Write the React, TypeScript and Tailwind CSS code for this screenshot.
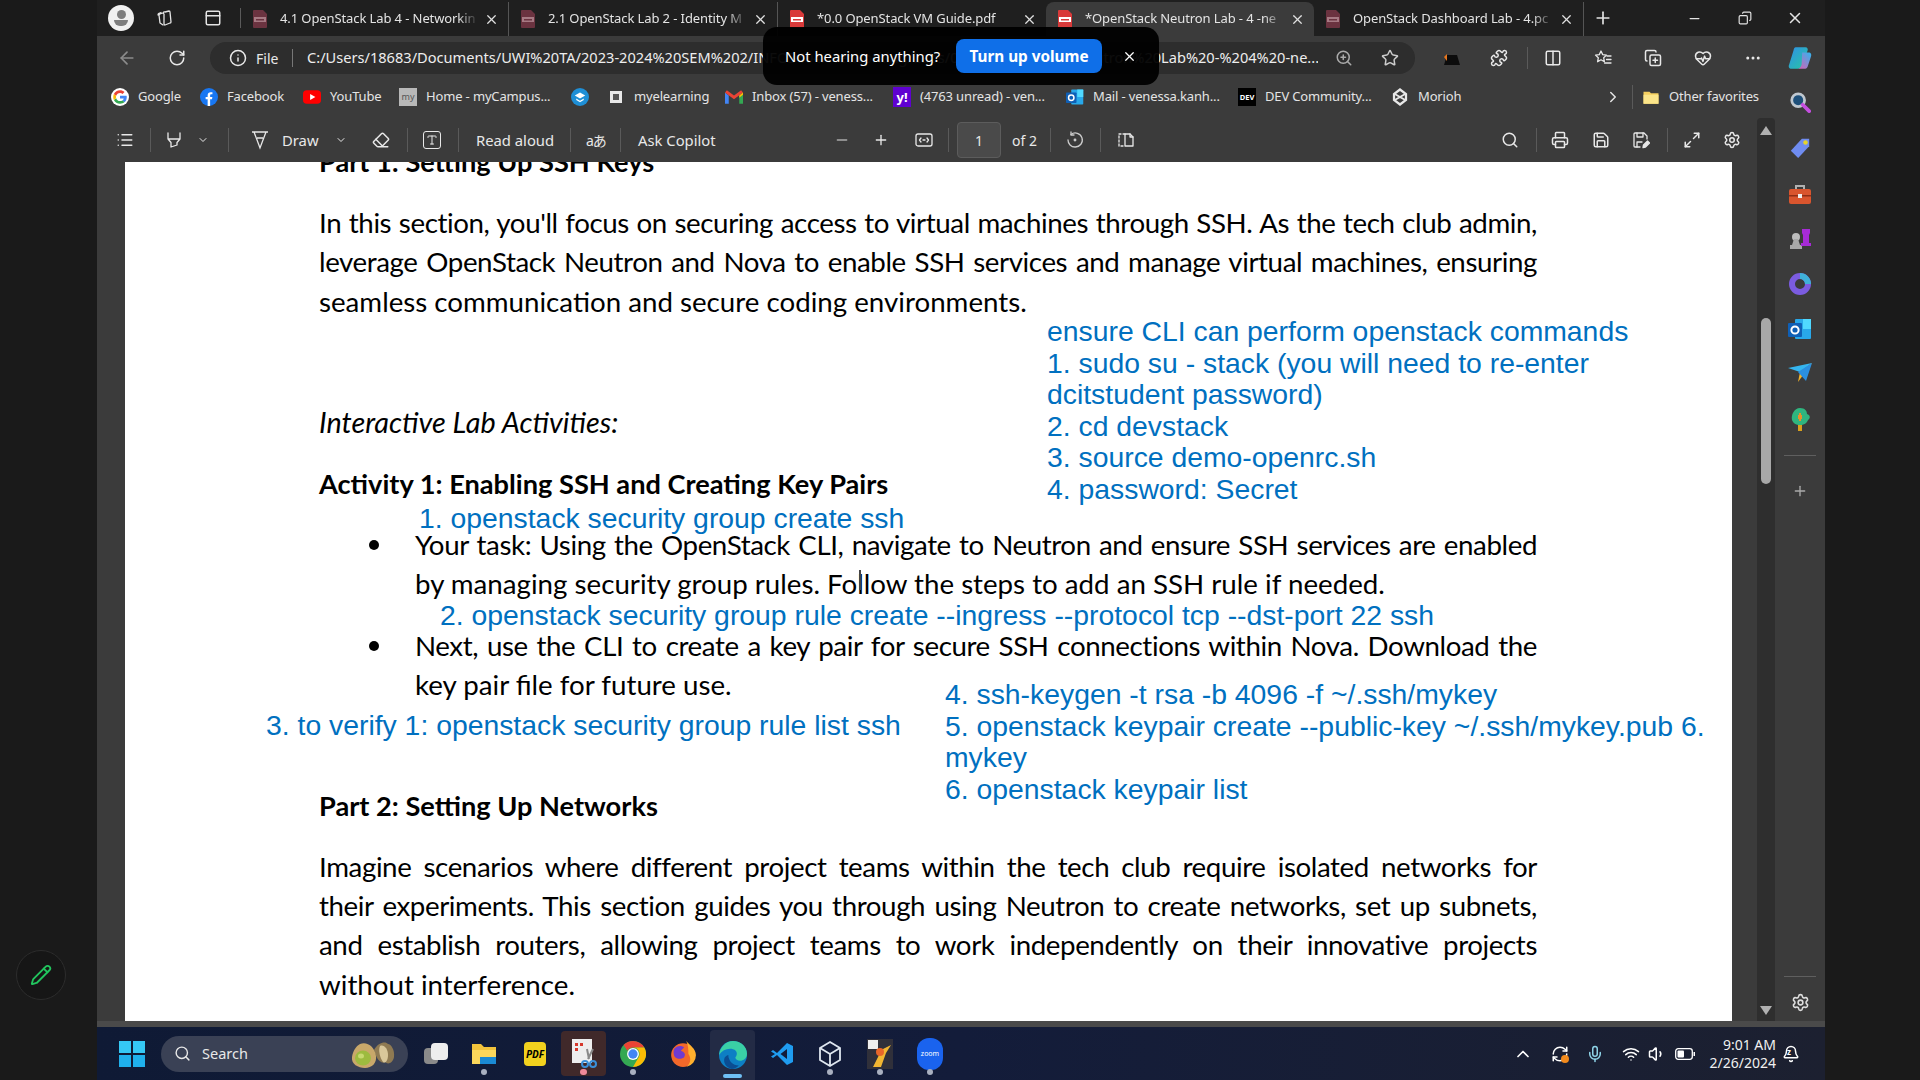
import React from "react";
import {
  ArrowLeft, RotateCw, Info, ZoomIn, Star, Puzzle, Columns2, Plus, Minus, X, Copy, List,
  ChevronDown, ChevronRight, ChevronUp, Eraser, Type, Search, Printer, Save, Maximize2,
  Settings, HeartPulse, Ellipsis, Mic, Wifi, Volume1, Bell, RefreshCw, Pencil,
  PanelTop, CopyPlus,
} from "lucide-react";

const ui = "font-['Noto_Sans','Open_Sans',sans-serif]";
const doc = "font-['Lato','Noto_Sans',sans-serif] text-[27.7px] text-black";
const blue = "absolute font-['Liberation_Sans',Arial,sans-serif] text-[28.35px] leading-[31.5px] text-[#0070c0] whitespace-nowrap";
const sep = "w-px h-[24px] bg-[#5a5a5a] shrink-0";
const line = "block h-[39.2px] leading-[39.2px] whitespace-nowrap";
const just = "block h-[39.2px] leading-[39.2px] tracking-[-0.4px] text-justify [text-align-last:justify]";

const PdfIcon = ({ dim }: { dim?: boolean }) => (
  <svg width="16" height="18" viewBox="0 0 16 18" className="shrink-0">
    <path d="M1 1a1 1 0 011-1h9l4 4v13a1 1 0 01-1 1H2a1 1 0 01-1-1z" fill={dim ? "#6b3340" : "#d93a3a"} />
    <rect x="2" y="7" width="12" height="5" fill={dim ? "#a77a84" : "#ffffff"} />
    <rect x="4" y="9" width="8" height="1.500" fill={dim ? "#6b3340" : "#d93a3a"} />
  </svg>
);

const Tab = ({ title, dim, active, className }: { title: string; dim?: boolean; active?: boolean; className: string }) => (
  <div className={`h-[34px] self-end flex items-center pl-[11px] pr-[9px] shrink-0 ${active ? "bg-[#3b3b3b] rounded-t-lg" : ""} ${className}`}>
    <PdfIcon dim={dim} />
    <span className="ml-[12px] flex-1 overflow-hidden whitespace-nowrap text-[13px] tracking-[-0.1px] text-[#e4e4e4] [mask-image:linear-gradient(to_right,black_90%,transparent)]">
      {title}
    </span>
    <X size={15} className="ml-[6px] shrink-0 text-[#e0e0e0]" />
  </div>
);

const Bm = ({ icon, label, className }: { icon: React.ReactNode; label?: string; className: string }) => (
  <div className={`flex items-center gap-[9px] shrink-0 ${className}`}>
    <span className="w-[18px] h-[18px] flex items-center justify-center shrink-0">{icon}</span>
    {label && <span className="whitespace-nowrap text-[13px] tracking-[-0.15px] text-[#e4e4e4]">{label}</span>}
  </div>
);

const GoogleG = () => (
  <svg width="18" height="18" viewBox="0 0 24 24">
    <circle cx="12" cy="12" r="12" fill="#fff" />
    <path d="M21 12.200c0-.7-.1-1.300-.2-1.900H12v3.600h5c-.2 1.200-.9 2.100-1.900 2.800l3 2.300c1.800-1.600 2.900-4 2.900-6.800z" fill="#4285f4" />
    <path d="M12 21c2.500 0 4.500-.8 6.100-2.200l-3-2.300c-.8.600-1.900.9-3.100.9-2.400 0-4.400-1.600-5.100-3.800l-3.100 2.400C5.300 19 8.400 21 12 21z" fill="#34a853" />
    <path d="M6.900 13.600c-.4-1.100-.4-2.200 0-3.300L3.800 7.900c-1.100 2.600-1.100 5.500 0 8.100z" fill="#fbbc05" />
    <path d="M12 6.600c1.300 0 2.500.5 3.400 1.300l2.600-2.600C16.400 3.900 14.400 3 12 3 8.400 3 5.300 5 3.800 7.900l3.100 2.400C7.600 8.200 9.600 6.600 12 6.600z" fill="#ea4335" />
  </svg>
);
const Fb = () => (
  <svg width="18" height="18" viewBox="0 0 24 24">
    <circle cx="12" cy="12" r="12" fill="#1877f2" />
    <path d="M16 15l.5-3h-3V10c0-.9.400-1.600 1.700-1.600h1.400V5.800S15.400 5.600 14.200 5.600c-2.400 0-4 1.500-4 4.100V12H7.500v3h2.700v9h3.300v-9z" fill="#fff" />
  </svg>
);
const Yt = () => (
  <svg width="18" height="14" viewBox="0 0 24 18">
    <rect width="24" height="18" rx="5" fill="#f00" />
    <path d="M9.500 5v8l7-4z" fill="#fff" />
  </svg>
);
const Gmail = () => (
  <svg width="18" height="14" viewBox="0 0 24 18">
    <path d="M0 3v15h5V7z" fill="#4285f4" />
    <path d="M24 3v15h-5V7z" fill="#34a853" />
    <path d="M0 3l12 9 12-9-2.500-3L12 7 2.500 0z" fill="#ea4335" />
    <path d="M19 7v3l5-4V3z" fill="#fbbc05" />
  </svg>
);
const Outlook = ({ s = 18 }: { s?: number }) => (
  <svg width={s} height={s} viewBox="0 0 24 24">
    <rect x="7" y="2" width="16" height="20" rx="1" fill="#28a8ea" />
    <rect x="15" y="2" width="8" height="10" fill="#50d9ff" />
    <rect x="0" y="6" width="14" height="14" rx="1" fill="#0f5fb5" />
    <circle cx="7" cy="13" r="3.600" fill="none" stroke="#fff" strokeWidth="2" />
  </svg>
);
const Morioh = () => (
  <svg width="18" height="18" viewBox="0 0 24 24" fill="none" stroke="#e8e8e8" strokeWidth="3">
    <path d="M12 2L4 8v8l8 6 8-6V8z" />
    <path d="M5 8l14 8M19 8L5 16" strokeWidth="2.500" />
  </svg>
);
const Folder = () => (
  <svg width="18" height="18" viewBox="0 0 24 24">
    <path d="M2 5h8l2 2h10v14H2z" fill="#f5cf5f" />
    <path d="M2 9h20v12H2z" fill="#fbe58a" />
  </svg>
);

const SideIcon = ({ children, className }: { children: React.ReactNode; className: string }) => (
  <div className={`w-[26px] h-[26px] flex items-center justify-center shrink-0 ${className}`}>{children}</div>
);

const TaskIcon = ({ children, dot, className }: { children: React.ReactNode; dot?: string; className: string }) => (
  <div className={`relative w-[26px] h-[53px] flex items-center justify-center shrink-0 ${className}`}>
    {children}
    {dot && <span className={`absolute bottom-[5px] left-[10px] w-[6px] h-[6px] rounded-full ${dot}`} />}
  </div>
);

const Stroke = ({ children, w = 18, h = 18, className }: { children: React.ReactNode; w?: number; h?: number; className: string }) => (
  <svg width={w} height={h} viewBox="0 0 18 18" fill="none" stroke="currentColor" strokeWidth="1.300" strokeLinejoin="round" strokeLinecap="round" className={`shrink-0 ${className}`}>
    {children}
  </svg>
);

export default function App() {
  return (
    <div className={`relative w-[1920px] h-[1080px] overflow-hidden flex bg-[#1a1a1a] ${ui}`}>
      {/* black band with the pen button */}
      <div className="w-[97px] shrink-0 flex flex-col justify-end items-center pb-[80px] pr-[16px]">
        <div className="w-[50px] h-[50px] rounded-full border border-[#2c2c2c] bg-[#161616] flex items-center justify-center">
          <Pencil size={22} className="text-[#22c55e]" />
        </div>
      </div>

      <div className="relative w-[1728px] shrink-0 flex flex-col">
        {/* tab strip */}
        <div className="h-[36px] shrink-0 bg-[#1f1f1f] flex items-center text-[#e4e4e4]">
          <div className="ml-[11px] w-[26px] h-[26px] rounded-full bg-[#f0f0f0] flex flex-col items-center justify-center shrink-0">
            <span className="w-[9px] h-[9px] rounded-full bg-[#7d7d7d]" />
            <span className="mt-[1px] w-[14px] h-[6px] rounded-b-full bg-[#7d7d7d]" />
          </div>
          <Stroke className="ml-[22px]">
            <path d="M9 3l4-1a1 1 0 011 1l1 10a1 1 0 01-1 1l-5 2a1 1 0 01-1-1V5a1 1 0 011-2z" />
            <path d="M7 4L4 5a1 1 0 00-1 1l1 8 3 2M5 3.500L2.500 4.500 2 6" />
          </Stroke>
          <PanelTop size={18} className="ml-[30px] shrink-0" />
          <div className="ml-[18px] w-px h-[20px] bg-[#5a5a5a] shrink-0" />
          <Tab title="4.1 OpenStack Lab 4 - Networkin" dim className="w-[268px] border-r border-[#555]" />
          <Tab title="2.1 OpenStack Lab 2 - Identity M" dim className="w-[269px] border-r border-[#555]" />
          <Tab title="*0.0 OpenStack VM Guide.pdf" className="w-[268px]" />
          <Tab title="*OpenStack Neutron Lab - 4 -ne" active className="w-[268px]" />
          <Tab title="OpenStack Dashboard Lab - 4.pc" dim className="w-[270px] border-r border-[#555]" />
          <Plus size={20} className="ml-[9px] shrink-0" />
          <Minus size={15} className="ml-[74px] shrink-0" />
          <Copy size={14} className="ml-[36px] shrink-0 -scale-x-100" />
          <X size={18} className="ml-[34px] shrink-0" />
        </div>

        {/* address row */}
        <div className="h-[44px] shrink-0 bg-[#3b3b3b] flex items-center text-[#e8e8e8]">
          <ArrowLeft size={20} className="ml-[20px] shrink-0 text-[#8c8c8c]" />
          <RotateCw size={18} className="ml-[31px] shrink-0" />
          <div className="ml-[24px] w-[1205px] h-[32px] rounded-full bg-[#2d2d2d] flex items-center shrink-0">
            <Info size={18} className="ml-[19px] shrink-0" />
            <span className="ml-[9px] w-[24px] text-[14px]">File</span>
            <div className="ml-[12px] w-px h-[18px] bg-[#777] shrink-0" />
            <span className="ml-[14px] w-[1011px] overflow-hidden whitespace-nowrap text-[14.6px] text-[#eee]">
              C:/Users/18683/Documents/UWI%20TA/2023-2024%20SEM%202/INFO3604/Networking/Labs/04/OpenStack%20Neutron%20Lab%20-%204%20-ne...
            </span>
            <ZoomIn size={18} className="ml-[17px] shrink-0 text-[#aaa]" />
            <Star size={18} className="ml-[28px] shrink-0 text-[#ccc]" />
          </div>
          <svg width="20" height="14" viewBox="0 0 20 14" className="ml-[25px] shrink-0">
            <path d="M4 14L7 4h10l3 10z" fill="#0c0c0c" />
            <path d="M4 6l3-3v7z" fill="#e8761e" />
          </svg>
          <Puzzle size={18} className="ml-[30px] shrink-0" />
          <div className="ml-[19px] w-px h-[22px] bg-[#5a5a5a] shrink-0" />
          <Columns2 size={18} className="ml-[16px] shrink-0" />
          <Stroke className="ml-[32px]">
            <path d="M7 2l1.700 3.600 3.800.5-2.800 2.700.7 3.900L7 10.800l-3.400 1.900.7-3.900L1.500 6.100l3.800-.5z" />
            <path d="M13 7h4M12.500 10.500H17M10.500 14H17" />
          </Stroke>
          <CopyPlus size={18} className="ml-[32px] shrink-0" />
          <HeartPulse size={18} className="ml-[32px] shrink-0" />
          <Ellipsis size={18} className="ml-[32px] shrink-0" />
          <svg width="26" height="26" viewBox="0 0 24 24" className="ml-[25px] shrink-0">
            <defs>
              <linearGradient id="cp1" x1="0" y1="0" x2="1" y2="1">
                <stop offset="0" stopColor="#2f8fe8" />
                <stop offset="1" stopColor="#28c9a0" />
              </linearGradient>
              <linearGradient id="cp2" x1="1" y1="0" x2="0" y2="1">
                <stop offset="0" stopColor="#2fb6f0" />
                <stop offset="1" stopColor="#e25bb0" />
              </linearGradient>
            </defs>
            <path d="M8 2h9c2 0 2.500 2 2 3l-5 14c-.5 2-2 3-4 3H4c-2 0-3-2-2-4l4-13c.4-2 1-3 2-3z" fill="url(#cp1)" />
            <path d="M14 7h6c2 0 3 2 2 4l-3 9c-.5 1.500-2 2-3 2h-7c3 0 4-2 4.500-4z" fill="url(#cp2)" />
          </svg>
        </div>

        {/* "turn up volume" popup */}
        <div className="absolute left-[666px] top-[27px] w-[396px] h-[58px] rounded-[14px] bg-black/95 flex items-center text-white z-10">
          <span className="ml-[22px] w-[155px] text-[14.8px] whitespace-nowrap">Not hearing anything?</span>
          <button className="ml-[16px] w-[146px] h-[34px] rounded-lg bg-[#0f6fe8] text-[15.3px] font-bold whitespace-nowrap">Turn up volume</button>
          <X size={15} className="ml-[20px]" />
        </div>

        <div className="flex-1 min-h-0 flex bg-[#3b3b3b]">
          <div className="w-[1678px] shrink-0 flex flex-col">
            {/* favourites */}
            <div className="h-[38px] pb-[4px] shrink-0 flex items-center text-[#e4e4e4]">
              <Bm icon={<GoogleG />} label="Google" className="ml-[14px] w-[89px]" />
              <Bm icon={<Fb />} label="Facebook" className="w-[103px]" />
              <Bm icon={<Yt />} label="YouTube" className="w-[96px]" />
              <Bm
                icon={<span className="w-[18px] h-[18px] bg-[#b8b8b8] text-[9px] leading-[18px] text-center text-[#555]">my</span>}
                label="Home - myCampus..."
                className="w-[172px]"
              />
              <Bm
                icon={
                  <svg width="18" height="18" viewBox="0 0 24 24">
                    <circle cx="12" cy="12" r="12" fill="#1f8fd6" />
                    <path d="M12 6l7 4-7 4-7-4zM7 14l5 3 5-3v2l-5 3-5-3z" fill="#fff" />
                  </svg>
                }
                className="w-[36px]"
              />
              <Bm
                icon={
                  <svg width="12" height="12" viewBox="0 0 12 12">
                    <rect width="12" height="12" fill="#e8e8e8" />
                    <rect x="3" y="3" width="6" height="6" fill="#555" />
                  </svg>
                }
                label="myelearning"
                className="w-[118px]"
              />
              <Bm icon={<Gmail />} label="Inbox (57) - veness..." className="w-[168px]" />
              <Bm
                icon={<span className="w-[18px] h-[20px] bg-[#5f01d1] text-white text-[13px] leading-[20px] font-bold text-center">y!</span>}
                label="(4763 unread) - ven..."
                className="w-[173px]"
              />
              <Bm icon={<Outlook />} label="Mail - venessa.kanh..." className="w-[172px]" />
              <Bm
                icon={<span className="w-[18px] h-[18px] bg-black text-white text-[7.5px] leading-[18px] font-bold text-center">DEV</span>}
                label="DEV Community..."
                className="w-[153px]"
              />
              <Bm icon={<Morioh />} label="Morioh" className="w-[213px]" />
              <ChevronRight size={18} className="shrink-0" />
              <div className="ml-[10px] w-px h-[24px] bg-[#5a5a5a] shrink-0" />
              <Bm icon={<Folder />} label="Other favorites" className="ml-[9px]" />
            </div>

            {/* pdf toolbar */}
            <div className="h-[44px] shrink-0 flex items-center text-[#e8e8e8] text-[14.8px]">
              <List size={18} className="ml-[19px] shrink-0" />
              <div className={`ml-[16px] ${sep}`} />
              <Stroke className="ml-[14px]">
                <path d="M3 2v6l3 3.500V16l6-2v-2.500L15 8V2M3 8h12" />
              </Stroke>
              <ChevronDown size={12} className="ml-[14px] shrink-0" />
              <div className={`ml-[19px] ${sep}`} />
              <svg width="18" height="20" viewBox="0 0 18 20" fill="none" stroke="currentColor" strokeWidth="1.300" className="ml-[22px] shrink-0">
                <path d="M1 2h16M3 2l6 16 6-16M6 8h6" />
              </svg>
              <span className="ml-[13px] w-[36px]">Draw</span>
              <ChevronDown size={12} className="ml-[17px] shrink-0" />
              <Eraser size={18} className="ml-[25px] shrink-0" />
              <div className={`ml-[17px] ${sep}`} />
              <div className="ml-[15px] w-[18px] h-[18px] border border-current rounded-[3px] flex items-center justify-center shrink-0">
                <Type size={12} />
              </div>
              <div className={`ml-[17px] ${sep}`} />
              <span className="ml-[17px] w-[78px] whitespace-nowrap">Read aloud</span>
              <div className={`ml-[16px] ${sep}`} />
              <span className="ml-[15px] w-[18px] text-[14px] whitespace-nowrap tracking-[-1px] font-['Noto_Sans','Noto_Sans_CJK_JP',sans-serif]">aあ</span>
              <div className={`ml-[16px] ${sep}`} />
              <span className="ml-[17px] w-[80px] whitespace-nowrap">Ask Copilot</span>
              <Minus size={16} className="ml-[117px] shrink-0 text-[#aaa]" />
              <Plus size={16} className="ml-[23px] shrink-0" />
              <Stroke className="ml-[26px]">
                <rect x="1" y="3" width="16" height="12" rx="2" />
                <path d="M6 7L4.500 9 6 11M12 7l1.500 2L12 11M8 9h2" />
              </Stroke>
              <div className={`ml-[15px] ${sep}`} />
              <div className="ml-[8px] w-[44px] h-[36px] bg-[#4a4a4a] border border-[#5c5c5c] rounded-sm flex items-center justify-center shrink-0 text-[14px]">1</div>
              <span className="ml-[11px] w-[24px] whitespace-nowrap text-[14px]">of 2</span>
              <div className={`ml-[14px] ${sep}`} />
              <Stroke className="ml-[15px] text-[#ccc]">
                <path d="M5 3.500A7 7 0 119 16a7 7 0 01-7-7" />
                <path d="M5 1v3h3" />
                <circle cx="9" cy="9" r=".8" fill="currentColor" />
              </Stroke>
              <div className={`ml-[16px] ${sep}`} />
              <Stroke className="ml-[15px]">
                <path d="M9 3h5l3 3v9H9z" />
                <path d="M14 3v3h3" />
                <path d="M9 3H3v12h6" strokeDasharray="2 2" />
              </Stroke>
              <Search size={18} className="ml-[367px] shrink-0" />
              <div className={`ml-[17px] ${sep}`} />
              <Printer size={18} className="ml-[14px] shrink-0" />
              <Save size={18} className="ml-[23px] shrink-0" />
              <Stroke className="ml-[22px]">
                <path d="M8 16H3a1 1 0 01-1-1V3a1 1 0 011-1h9l3 3v3" />
                <path d="M5 2v4h6V2M5 16v-5h5" />
                <path d="M11 16.500l.5-2.500 4-4 2 2-4 4z" fill="currentColor" />
              </Stroke>
              <div className={`ml-[17px] ${sep}`} />
              <Maximize2 size={18} className="ml-[15px] shrink-0" />
              <Settings size={18} className="ml-[22px] shrink-0" />
              <div className="ml-[16px] w-[18px] h-[44px] bg-[#2e2e2e] rounded-t flex justify-center pt-[8px] shrink-0">
                <span className="w-0 h-0 border-x-[6px] border-x-transparent border-b-[9px] border-b-[#b0b0b0]" />
              </div>
            </div>

            {/* pdf viewport */}
            <div className="flex-1 min-h-0 flex border-b-[6px] border-[#4a4a4a]">
              <div className="w-[28px] shrink-0" />
              <div className="relative w-[1607px] shrink-0 bg-white overflow-hidden">
                <div className={`pl-[194px] pr-[195px] ${doc}`}>
                  <h2 className={`-mt-[20px] font-bold text-[27.2px] ${line}`}>Part 1: Setting Up SSH Keys</h2>
                  <p className="mt-[22px]">
                    <span className={just}>In this section, you'll focus on securing access to virtual machines through SSH. As the tech club admin,</span>
                    <span className={just}>leverage OpenStack Neutron and Nova to enable SSH services and manage virtual machines, ensuring</span>
                    <span className={line}>seamless communication and secure coding environments.</span>
                  </p>
                  <p className={`mt-[82px] italic text-[28.8px] ${line}`}>Interactive Lab Activities:</p>
                  <h3 className={`mt-[22px] font-bold text-[27.2px] ${line}`}>Activity 1: Enabling SSH and Creating Key Pairs</h3>
                  <ul className="mt-[22px] pl-[96px]">
                    <li className="relative">
                      <span className="absolute -left-[46px] top-[15px] w-[10px] h-[10px] rounded-full bg-black" />
                      <span className={just}>Your task: Using the OpenStack CLI, navigate to Neutron and ensure SSH services are enabled</span>
                      <span className={line}>by managing security group rules. Follow the steps to add an SSH rule if needed.</span>
                    </li>
                    <li className="relative mt-[22px]">
                      <span className="absolute -left-[46px] top-[15px] w-[10px] h-[10px] rounded-full bg-black" />
                      <span className={just}>Next, use the CLI to create a key pair for secure SSH connections within Nova. Download the</span>
                      <span className={line}>key pair file for future use.</span>
                    </li>
                  </ul>
                  <h3 className={`mt-[82px] font-bold text-[27.2px] ${line}`}>Part 2: Setting Up Networks</h3>
                  <p className="mt-[22px]">
                    <span className={just}>Imagine scenarios where different project teams within the tech club require isolated networks for</span>
                    <span className={just}>their experiments. This section guides you through using Neutron to create networks, set up subnets,</span>
                    <span className={just}>and establish routers, allowing project teams to work independently on their innovative projects</span>
                    <span className={line}>without interference.</span>
                  </p>
                </div>

                {/* typed annotations on the pdf */}
                <div className={`${blue} left-[922px] top-[154px]`}>
                  ensure CLI can perform openstack commands
                  <br />
                  1. sudo su - stack (you will need to re-enter
                  <br />
                  dcitstudent password)
                  <br />
                  2. cd devstack
                  <br />
                  3. source demo-openrc.sh
                  <br />
                  4. password: Secret
                </div>
                <div className={`${blue} left-[294px] top-[341px]`}>1. openstack security group create ssh</div>
                <div className={`${blue} left-[315px] top-[438px]`}>2. openstack security group rule create --ingress --protocol tcp --dst-port 22 ssh</div>
                <div className={`${blue} left-[141px] top-[548px]`}>3. to verify 1: openstack security group rule list ssh</div>
                <div className={`${blue} left-[820px] top-[517px]`}>
                  4. ssh-keygen -t rsa -b 4096 -f ~/.ssh/mykey
                  <br />
                  5. openstack keypair create --public-key ~/.ssh/mykey.pub 6.
                  <br />
                  mykey
                  <br />
                  6. openstack keypair list
                </div>
                {/* text cursor */}
                <span className="absolute left-[734px] top-[408px] w-[2px] h-[20px] bg-[#444]" />
              </div>
              <div className="w-[25px] shrink-0" />
              <div className="relative w-[18px] shrink-0 bg-[#2e2e2e]">
                <div className="absolute left-[4px] top-[156px] w-[10px] h-[166px] rounded-full bg-[#a8a8a8]" />
                <span className="absolute left-[3px] bottom-[6px] w-0 h-0 border-x-[6px] border-x-transparent border-t-[9px] border-t-[#b0b0b0]" />
              </div>
            </div>
          </div>

          {/* edge sidebar */}
          <div className="w-[50px] shrink-0 flex flex-col items-center border-b-[6px] border-[#4a4a4a]">
            <SideIcon className="mt-[9px]">
              <svg width="22" height="22" viewBox="0 0 24 24" fill="none">
                <circle cx="10" cy="10" r="7" stroke="#bfc7cf" strokeWidth="3" fill="#1d4f7a" />
                <path d="M15 15l7 7" stroke="#c44fe0" strokeWidth="4" strokeLinecap="round" />
              </svg>
            </SideIcon>
            <SideIcon className="mt-[20px]">
              <svg width="22" height="24" viewBox="0 0 24 24">
                <path d="M2 15L14 2h8v8L10 23z" fill="#6f8cf0" />
                <circle cx="18" cy="6" r="2.500" fill="#e6d42a" />
              </svg>
            </SideIcon>
            <SideIcon className="mt-[20px]">
              <svg width="24" height="22" viewBox="0 0 24 22">
                <path d="M8 6V3h8v3" fill="none" stroke="#b0b0b0" strokeWidth="2" />
                <rect x="1" y="6" width="22" height="15" rx="2" fill="#d9552e" />
                <rect x="1" y="12" width="22" height="1.500" fill="#8f2f16" />
                <rect x="10" y="11" width="4" height="4" fill="#eee" />
              </svg>
            </SideIcon>
            <SideIcon className="mt-[18px]">
              <svg width="24" height="24" viewBox="0 0 24 24">
                <circle cx="8" cy="11" r="4" fill="#bdbdbd" />
                <path d="M6 13h4l2 6H4zM2 19h12v4H2z" fill="#a8a8a8" />
                <path d="M14 3h8v4l-1 2v8h2v3h-10v-3h2V9l-1-2z" fill="#a62bd6" />
              </svg>
            </SideIcon>
            <SideIcon className="mt-[20px]">
              <svg width="24" height="24" viewBox="0 0 24 24" fill="none">
                <circle cx="12" cy="12" r="8" stroke="#7b5ce0" strokeWidth="6" />
                <path d="M12 4a8 8 0 018 8" stroke="#3fb1d8" strokeWidth="6" />
              </svg>
            </SideIcon>
            <SideIcon className="mt-[19px]">
              <Outlook s={24} />
            </SideIcon>
            <SideIcon className="mt-[18px]">
              <svg width="24" height="22" viewBox="0 0 24 22">
                <path d="M0 6l24-5-12 9z" fill="#35b6f0" />
                <path d="M24 1L12 10l-2 10z" fill="#f0b22a" />
                <path d="M24 1l-6 18-8-9z" fill="#2a8fe0" />
              </svg>
            </SideIcon>
            <SideIcon className="mt-[20px]">
              <svg width="24" height="26" viewBox="0 0 24 26">
                <rect x="10" y="18" width="4" height="7" fill="#d9a11c" />
                <path d="M12 2c5 0 7 3 7 6 3 1 4 4 1 6-1 3-4 5-8 5s-7-2-8-5c-1-5 2-12 8-12z" fill="#2fb57f" />
                <path d="M10 9h4v4h-4zM11 7h2v8h-2z" fill="#e8912a" />
              </svg>
            </SideIcon>
            <div className="mt-[23px] w-[32px] h-px bg-[#5f5f5f]" />
            <Plus size={16} className="mt-[27px] text-[#aaa]" />
            <div className="mt-auto w-[32px] h-px bg-[#5f5f5f]" />
            <Settings size={19} className="mt-[16px] mb-[9px] text-[#ddd]" />
          </div>
        </div>

        {/* windows taskbar */}
        <div className="h-[53px] shrink-0 bg-gradient-to-r from-[#0f1a35] via-[#131c3a] to-[#1c2030] flex items-center">
          <div className="ml-[22px] w-[26px] h-[26px] grid grid-cols-2 gap-[2px] shrink-0">
            <span className="bg-[#35c8f5]" />
            <span className="bg-[#35c8f5]" />
            <span className="bg-[#1fb0ec]" />
            <span className="bg-[#1fb0ec]" />
          </div>
          <div className="ml-[16px] w-[247px] h-[36px] rounded-full bg-[#3a4155] flex items-center text-[#e8e8e8] shrink-0">
            <Search size={17} className="ml-[13px] shrink-0" />
            <span className="ml-[11px] text-[14.5px]">Search</span>
            <svg width="46" height="32" viewBox="0 0 46 32" className="ml-auto mr-[12px] shrink-0">
              <path d="M24 12c4-8 12-9 14-6 3 0 7 6 6 13-1 6-6 8-9 5-3 2-8-1-11-12z" fill="#8f7a52" />
              <path d="M30 8c4-2 8 3 8 9s-3 9-5 7c-3-4-5-12-3-16z" fill="#d9c79a" />
              <path d="M10 6c7-3 15 3 16 12 1 7-4 12-11 12S1 26 2 19C3 13 6 8 10 6z" fill="#c9a86a" />
              <ellipse cx="13" cy="20" rx="8" ry="7.500" fill="#9dbb3f" />
              <ellipse cx="11" cy="18" rx="3" ry="2.500" fill="#c7d970" />
            </svg>
          </div>
          <TaskIcon className="ml-[15px]">
            <span className="relative w-[24px] h-[22px]">
              <span className="absolute left-0 top-[5px] w-[14px] h-[16px] rounded-sm bg-[#8a8a8a]" />
              <span className="absolute right-0 top-0 w-[17px] h-[17px] rounded-sm bg-[#eeeeee]" />
            </span>
          </TaskIcon>
          <TaskIcon className="ml-[22px]" dot="bg-[#a9b0c0]">
            <svg width="26" height="24" viewBox="0 0 26 24">
              <path d="M1 2h9l3 3h12v17H1z" fill="#f2c33c" />
              <rect x="1" y="8" width="24" height="14" fill="#fbd75b" />
              <rect x="9" y="15" width="16" height="7" fill="#1a8ad4" />
            </svg>
          </TaskIcon>
          <TaskIcon className="ml-[25px]">
            <span className="w-[22px] h-[24px] bg-[#f2d21e] rounded-sm text-black text-[10px] leading-[24px] font-bold italic text-center">PDF</span>
          </TaskIcon>
          <div className="relative ml-[13px] w-[45px] h-[45px] rounded bg-[#40292a] flex items-center justify-center shrink-0">
            <svg width="26" height="30" viewBox="0 0 26 30">
              <rect x="1" y="0" width="20" height="24" fill="#eeeeee" />
              <path d="M4 4h3v3H4zM9 4h3v3H9zM4 9h3v3H4z" fill="#d6382c" />
              <path d="M16 10l2 10M22 10l-5 10" stroke="#888" strokeWidth="2" />
              <circle cx="14" cy="25" r="3" fill="none" stroke="#3a8fd8" strokeWidth="2" />
              <circle cx="22" cy="25" r="3" fill="none" stroke="#3a8fd8" strokeWidth="2" />
            </svg>
            <span className="absolute bottom-[1px] left-[19px] w-[7px] h-[6px] rounded-full bg-[#f08a9a]" />
          </div>
          <TaskIcon className="ml-[14px]" dot="bg-[#a9b0c0]">
            <svg width="26" height="26" viewBox="0 0 24 24">
              <circle cx="12" cy="12" r="12" fill="#34a853" />
              <path d="M12 0a12 12 0 0110.400 6H12a6 6 0 00-5.200 3L3.300 3.800A12 12 0 0112 0z" fill="#ea4335" />
              <path d="M22.400 6A12 12 0 0112 24l5.200-9A6 6 0 0012 6z" fill="#fbbc05" />
              <circle cx="12" cy="12" r="5.500" fill="#fff" />
              <circle cx="12" cy="12" r="4.300" fill="#4285f4" />
            </svg>
          </TaskIcon>
          <TaskIcon className="ml-[24px]">
            <svg width="26" height="28" viewBox="0 0 24 26">
              <circle cx="12" cy="14" r="11" fill="#f2682a" />
              <path d="M15 1c3 4 9 7 9 13a11 11 0 01-9 11c4-3 5-8 2-12 0-4 0-8-2-12z" fill="#ffb02e" />
              <path d="M4 8c3-3 7-3 9-1l-3 3c3 1 5 3 3 6-2 2-7 2-9-1-1-2-1-5 0-7z" fill="#6f3bd1" />
            </svg>
          </TaskIcon>
          <div className="relative ml-[14px] w-[45px] h-[50px] self-end rounded-t bg-[#232b45] flex items-center justify-center shrink-0">
            <svg width="28" height="28" viewBox="0 0 24 24">
              <circle cx="12" cy="12" r="12" fill="#0d7fc4" />
              <path d="M0 12C1 5 6 0 12 0c7 0 12 5 12 11 0 4-3 6-6 6-2 0-4-1-4-3 2-2 2-6-2-7C7 6 3 8 0 12z" fill="#3ad0a5" />
              <path d="M8 12c0 5 4 9 9 9-2 2-4 3-6 3-5-1-8-6-6-10 1-1 2-2 3-2z" fill="#0b4d92" />
            </svg>
            <span className="absolute bottom-[2px] left-[13px] w-[19px] h-[4px] rounded-full bg-[#6fc0f5]" />
          </div>
          <TaskIcon className="ml-[14px]">
            <svg width="24" height="26" viewBox="0 0 24 24">
              <path d="M17 1L7 11 3 8 1 9.500 5 12l-4 2.500L3 16l4-3 10 10 6-3V4zm0 6v10l-6.500-5z" fill="#1f9cf0" fillRule="evenodd" />
            </svg>
          </TaskIcon>
          <TaskIcon className="ml-[22px]" dot="bg-[#a9b0c0]">
            <svg width="24" height="28" viewBox="0 0 24 28" fill="none" stroke="#dfe7f0" strokeWidth="1.800">
              <path d="M12 2l10 6v12l-10 6-10-6V8z" />
              <path d="M2 8l10 6 10-6M12 14v12" />
            </svg>
          </TaskIcon>
          <TaskIcon className="ml-[24px]" dot="bg-[#a9b0c0]">
            <svg width="26" height="30" viewBox="0 0 26 30">
              <rect width="26" height="30" fill="#30303a" />
              <rect x="1" y="1" width="10" height="9" fill="#eee" />
              <path d="M6 28l6-12 2-5 10-5-5 8-5 14z" fill="#f2b632" />
              <circle cx="13" cy="13" r="4" fill="#e8662a" />
            </svg>
          </TaskIcon>
          <TaskIcon className="ml-[24px]" dot="bg-[#a9b0c0]">
            <span className="w-[26px] h-[32px] rounded-[12px] bg-[#1a63ee] text-white text-[7px] leading-[32px] text-center">zoom</span>
          </TaskIcon>

          <ChevronUp size={20} className="ml-[570px] shrink-0 text-white" />
          <div className="relative ml-[18px] shrink-0">
            <RefreshCw size={18} className="text-white" />
            <span className="absolute right-0 bottom-0 w-[8px] h-[8px] rounded-full bg-[#f28a1c]" />
          </div>
          <Mic size={18} className="ml-[17px] shrink-0 text-[#8fd4e8]" />
          <Wifi size={18} className="ml-[18px] shrink-0 text-white" />
          <Volume1 size={18} className="ml-[8px] shrink-0 text-white" />
          <svg width="20" height="12" viewBox="0 0 20 12" className="ml-[9px] mr-[1px] shrink-0">
            <rect x=".7" y=".7" width="16.600" height="10.600" rx="2.500" fill="none" stroke="#fff" strokeWidth="1.300" />
            <rect x="2.500" y="2.500" width="6.500" height="7" rx="1" fill="#fff" />
            <rect x="18.500" y="4" width="1.500" height="4" fill="#fff" />
          </svg>
          <div className="w-[80px] text-right text-[14px] leading-[18px] text-[#f0f0f0] shrink-0">
            <div>9:01 AM</div>
            <div>2/26/2024</div>
          </div>
          <div className="relative ml-[6px] w-[18px] h-[18px] shrink-0">
            <Bell size={18} className="text-white" />
            <span className="absolute left-[5px] top-[2px] text-[8px] leading-[10px] font-bold text-white">z</span>
          </div>
        </div>
      </div>

      <div className="w-[95px] shrink-0 bg-[#1a1a1a]" />
    </div>
  );
}
